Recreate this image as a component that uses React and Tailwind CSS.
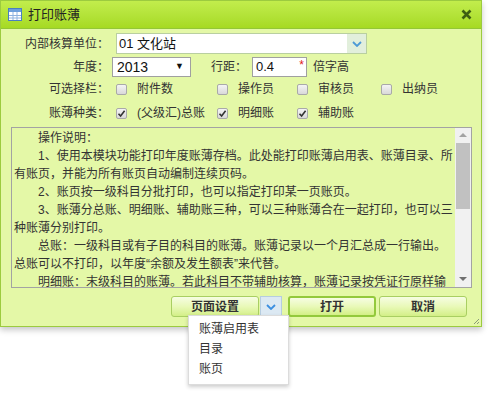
import React from "react";

const font = { fontFamily: '"Liberation Sans", "Noto Sans CJK SC", sans-serif' };

function Check({ checked }) {
  return (
    <span className="inline-flex w-[11px] h-[11px] shrink-0 items-center justify-center rounded-[2px] border border-[#a9a9a9] bg-gradient-to-b from-[#f4f4f4] to-[#d9d9d9]">
      {checked && (
        <svg width="9" height="9" viewBox="0 0 9 9">
          <path d="M1.5 4.8 L3.6 7 L7.6 1.8" fill="none" stroke="#333" strokeWidth="1.6" />
        </svg>
      )}
    </span>
  );
}

function Option({ label, checked, width }) {
  return (
    <div className={`flex items-center gap-[10px] ${width}`}>
      <Check checked={checked} />
      <span>{label}</span>
    </div>
  );
}

function Btn({ children, strong }) {
  return (
    <button
      className={`h-[21px] w-[88px] rounded-[3px] bg-gradient-to-b from-[#f6fde2] via-[#e9f9b8] to-[#d3ef86] text-[12px] font-bold text-[#333] ${
        strong ? "border-2 border-[#93c93c]" : "border border-[#a9cf62]"
      }`}
    >
      {children}
    </button>
  );
}

// label with a full-width colon box
function Label({ text }) {
  return (
    <div className="flex w-[108px] shrink-0 justify-end">
      <span>{text}</span>
      <span className="inline-block w-[12px] text-left">：</span>
    </div>
  );
}

const lines = [
  { t: "操作说明：", indent: true },
  { t: "1、使用本模块功能打印年度账薄存档。此处能打印账薄启用表、账薄目录、所", indent: true },
  { t: "有账页，并能为所有账页自动编制连续页码。" },
  { t: "2、账页按一级科目分批打印，也可以指定打印某一页账页。", indent: true },
  { t: "3、账薄分总账、明细账、辅助账三种，可以三种账薄合在一起打印，也可以三", indent: true },
  { t: "种账薄分别打印。" },
  { t: "总账：一级科目或有子目的科目的账薄。账薄记录以一个月汇总成一行输出。", indent: true },
  { t: "总账可以不打印，以年度“余额及发生额表”来代替。" },
  { t: "明细账：末级科目的账薄。若此科目不带辅助核算，账薄记录按凭证行原样输", indent: true },
];

export default function App() {
  return (
    <div className="w-[489px] h-[394px] bg-white text-[12px] text-[#333] [text-spacing-trim:space-all]" style={font}>
      <div className="relative w-[482px] h-[327px] border border-[#9ccb3f] bg-[#e4f8a7] shadow-[0_3px_6px_rgba(0,0,0,0.22)]">
        {/* title bar */}
        <div className="flex h-[28px] items-center border-b border-[#93c736] bg-gradient-to-b from-[#c2ed4c] to-[#a6da22] pl-[7px] pr-[9px]">
          <svg width="14" height="13" viewBox="0 0 14 13">
            <rect x="0.5" y="0.5" width="13" height="12" fill="#fff" stroke="#4a7fc1" />
            <rect x="1" y="1" width="12" height="3" fill="#6c9fdc" />
            <path d="M1 7.5 H13 M1 10 H13 M5 4 V12 M9 4 V12" stroke="#8fb3e0" strokeWidth="1" />
          </svg>
          <span className="ml-[6px] text-[13px] text-[#222]">打印账薄</span>
          <svg className="ml-auto" width="11" height="11" viewBox="0 0 11 11">
            <path d="M1.5 1.5 L9.5 9.5 M9.5 1.5 L1.5 9.5" stroke="#3d5e12" strokeWidth="2.6" />
          </svg>
        </div>

        {/* form */}
        <div className="mt-[4px] flex h-[21px] items-center">
          <Label text="内部核算单位" />
          <div className="ml-[7px] flex h-[21px] w-[251px] items-center border border-[#b9cfa0] bg-white">
            <span className="flex-1 pl-[2px] text-[13px] text-[#111]">01 文化站</span>
            <span className="flex h-full w-[19px] items-center justify-center bg-[#e2efdc]">
              <svg width="10" height="6" viewBox="0 0 10 6">
                <path d="M1 1 L5 5 L9 1" fill="none" stroke="#4d9ad6" strokeWidth="1.8" />
              </svg>
            </span>
          </div>
        </div>

        <div className="mt-[3px] flex h-[20px] items-center">
          <Label text="年度" />
          <div className="ml-[3px] flex h-[20px] w-[79px] items-center border border-[#a0a0a0] bg-white pl-[4px] pr-[6px]">
            <span className="flex-1 text-[14px] text-[#111]">2013</span>
            <span className="text-[9px] text-[#111]">▼</span>
          </div>
          <span className="ml-[20px]">行距</span>
          <span className="inline-block w-[12px]">：</span>
          <div className="relative ml-[5px] flex h-[20px] w-[55px] items-center border border-[#a0a0a0] bg-white pl-[3px]">
            <span className="text-[13px] text-[#111]">0.4</span>
            <span className="absolute right-[2px] top-[-2px] text-[12px] text-[#e02020]">*</span>
          </div>
          <span className="ml-[6px]">倍字高</span>
        </div>

        <div className="flex h-[24px] items-center">
          <Label text="可选择栏" />
          <div className="ml-[7px] flex items-center">
            <Option label="附件数" width="w-[101px]" />
            <Option label="操作员" width="w-[80px]" />
            <Option label="审核员" width="w-[84px]" />
            <Option label="出纳员" width="w-[70px]" />
          </div>
        </div>

        <div className="flex h-[24px] items-center">
          <Label text="账薄种类" />
          <div className="ml-[7px] flex items-center">
            <Option label="(父级汇)总账" checked width="w-[101px]" />
            <Option label="明细账" checked width="w-[80px]" />
            <Option label="辅助账" checked width="w-[84px]" />
          </div>
        </div>

        {/* instructions box */}
        <div className="ml-[10px] mt-[2px] flex h-[161px] w-[461px] border border-[#a3a3a3]">
          <div className="flex-1 overflow-hidden pl-[2px] pt-[1px] leading-[18px]">
            {lines.map((l, i) => (
              <div key={i} className={`whitespace-nowrap ${l.indent ? "pl-[24px]" : ""}`}>
                {l.t}
              </div>
            ))}
          </div>
          <div className="flex w-[16px] flex-col items-center bg-[#f1f1f1]">
            <span className="mt-[5px] h-0 w-0 border-x-[4px] border-b-[4px] border-x-transparent border-b-[#a3a3a3]" />
            <span className="mt-[6px] h-[66px] w-[14px] bg-[#c1c1c1]" />
            <span className="mt-auto mb-[6px] h-0 w-0 border-x-[4px] border-t-[4px] border-x-transparent border-t-[#707070]" />
          </div>
        </div>

        {/* buttons */}
        <div className="mt-[8px] flex items-center justify-end pr-[14px]">
          <div className="relative flex">
            <Btn>页面设置</Btn>
            <span className="ml-[1px] flex h-[21px] w-[22px] items-center justify-center border border-[#b6cde0] bg-[#dce9f3]">
              <svg width="10" height="6" viewBox="0 0 10 6">
                <path d="M1 1 L5 5 L9 1" fill="none" stroke="#3b8fe0" strokeWidth="1.8" />
              </svg>
            </span>
            <div className="absolute left-[17px] top-[19px] z-10 w-[101px] border border-[#dcdcdc] bg-white pb-[5px] pt-[3px] shadow-[0_2px_4px_rgba(0,0,0,0.2)]">
              {["账薄启用表", "目录", "账页"].map((m) => (
                <div key={m} className="h-[20px] pl-[10px] leading-[20px] text-[12px] text-[#333]">
                  {m}
                </div>
              ))}
            </div>
          </div>
          <div className="ml-[6px]">
            <Btn strong>打开</Btn>
          </div>
          <div className="ml-[3px]">
            <Btn>取消</Btn>
          </div>
        </div>

        <svg className="absolute bottom-[1px] right-[1px]" width="7" height="7" viewBox="0 0 7 7">
          <path d="M6 1 L1 6 M6 4 L4 6" stroke="#8a9a7a" strokeWidth="1" />
        </svg>
      </div>
    </div>
  );
}
